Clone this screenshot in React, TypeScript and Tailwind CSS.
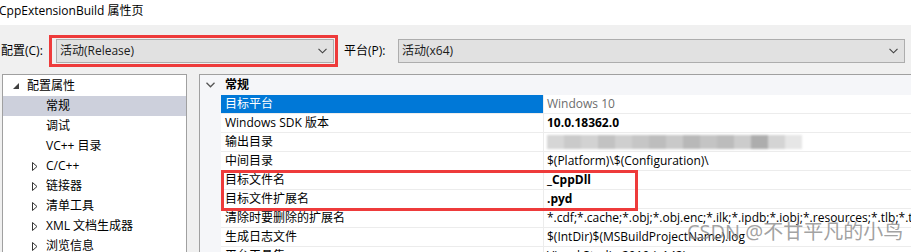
const font = '[font-family:"Open_Sans","Noto_Sans_CJK_SC",sans-serif]'

type Row = { name: string; value: string; bold?: boolean; gray?: boolean; blur?: boolean }

const rows: Row[] = [
  { name: '目标平台', value: 'Windows 10', gray: true },
  { name: 'Windows SDK 版本', value: '10.0.18362.0', bold: true },
  { name: '输出目录', value: '', blur: true },
  { name: '中间目录', value: '$(Platform)\\$(Configuration)\\' },
  { name: '目标文件名', value: '_CppDll', bold: true },
  { name: '目标文件扩展名', value: '.pyd', bold: true },
  { name: '清除时要删除的扩展名', value: '*.cdf;*.cache;*.obj;*.obj.enc;*.ilk;*.ipdb;*.iobj;*.resources;*.tlb;*.tli;*.tlh;*.tmp' },
  { name: '生成日志文件', value: '$(IntDir)$(MSBuildProjectName).log' },
  { name: '平台工具集', value: 'Visual Studio 2019 (v142)' },
]

const tree = [
  { label: '常规', selected: true },
  { label: '调试' },
  { label: 'VC++ 目录' },
  { label: 'C/C++', arrow: true },
  { label: '链接器', arrow: true },
  { label: '清单工具', arrow: true },
  { label: 'XML 文档生成器', arrow: true },
  { label: '浏览信息', arrow: true },
]

function Chevron() {
  return (
    <svg width="9" height="6" viewBox="0 0 9 6" className="shrink-0">
      <polyline points="0.5,0.8 4.5,4.8 8.5,0.8" fill="none" stroke="#404040" strokeWidth="1.1" />
    </svg>
  )
}

function Combo({ text, w }: { text: string; w: string }) {
  return (
    <div className={`${w} h-[24px] bg-[#e1e1e1] border border-[#adadad] flex items-center justify-between pl-[3px] pr-[6px]`}>
      <span className="text-[#1b1b1b]">{text}</span>
      <Chevron />
    </div>
  )
}

const blurs = ['#d6d6d6', '#cacaca', '#d2d2d2', '#c2c2c2', '#cfcfcf', '#c6c6c6', '#bdbdbd', '#c9c9c9', '#b8b8b8', '#c4c4c4', '#bcbcbc', '#cccccc', '#adadad', '#d4d4d4', '#e6e6e6']

export default function App() {
  return (
    <div className={`relative w-[911px] h-[252px] overflow-hidden bg-[#f0f0f0] text-[12px] leading-none text-black ${font}`}>
      {/* title */}
      <div className="h-[25px] bg-white flex items-center -ml-[1px] pb-[4px]">CppExtensionBuild 属性页</div>

      {/* configuration row */}
      <div className="h-[49px] flex items-start pt-[14px]">
        <div className="w-[56px] h-[24px] flex items-center pl-[1px]">配置(C):</div>
        <Combo text="活动(Release)" w="w-[278px]" />
        <div className="w-[64px] h-[24px] flex items-center pl-[10px]">平台(P):</div>
        <Combo text="活动(x64)" w="w-[507px]" />
      </div>

      {/* panels */}
      <div className="flex pl-[2px] gap-[12px] h-[200px]">
        <div className="w-[185px] shrink-0 bg-white border border-[#a0a0a0] pt-[1px]">
          <div className="h-[20px] flex items-center">
            <svg width="6" height="6" viewBox="0 0 6 6" className="ml-[10px] mr-[8px]">
              <polygon points="6,0 6,6 0,6" fill="#404040" />
            </svg>
            <span>配置属性</span>
          </div>
          {tree.map((t) => (
            <div key={t.label} className={`h-[20px] flex items-center ${t.selected ? 'bg-[#cdd0dc]' : ''}`}>
              <div className="w-[43px] shrink-0 flex justify-end pr-[8px]">
                {t.arrow && (
                  <svg width="6" height="9" viewBox="0 0 6 9">
                    <polygon points="0.5,0.5 5,4.5 0.5,8.5" fill="none" stroke="#333" strokeWidth="1" />
                  </svg>
                )}
              </div>
              <span>{t.label}</span>
            </div>
          ))}
        </div>

        <div className="w-[720px] shrink-0 bg-[#f5f6f9] border border-[#a0a0a0]">
          <div className="h-[20px] flex items-center">
            <svg width="9" height="6" viewBox="0 0 9 6" className="ml-[6px] mr-[10px]">
              <polyline points="0.5,0.8 4.5,4.8 8.5,0.8" fill="none" stroke="#555" strokeWidth="1.3" />
            </svg>
            <span className="font-bold">常规</span>
          </div>
          <div className="ml-[21px] bg-white">
            {rows.map((r, i) => (
              <div key={r.name} className="h-[19px] flex border-b border-[#ececec]">
                <div className={`w-[323px] shrink-0 flex items-center pl-[4px] border-r border-[#ececec] ${i === 0 ? 'bg-[#0078d7] text-white' : ''}`}>
                  {r.name}
                </div>
                <div
                  className={`flex-1 flex items-center pl-[3px] whitespace-nowrap overflow-hidden ${r.bold ? 'font-bold' : ''} ${r.gray ? 'text-[#6d6d6d]' : ''}`}
                >
                  {r.blur ? (
                    <div className="flex h-[14px] blur-[1px]">
                      {blurs.map((c, j) => (
                        <div key={j} className="w-[17px] h-full" style={{ background: c }} />
                      ))}
                    </div>
                  ) : (
                    r.value
                  )}
                </div>
              </div>
            ))}
          </div>
        </div>
      </div>

      {/* red annotations */}
      <div className="absolute left-[49px] top-[35px] w-[289px] h-[32px] border-[3px] border-[#ee3b3b]" />
      <div className="absolute left-[221px] top-[170px] w-[417px] h-[41px] border-[3px] border-[#ee3b3b]" />

      {/* watermark */}
      <div className="absolute left-[687px] top-[222px] text-[20px] text-[#8a8a8a]/80 whitespace-nowrap">CSDN @不甘平凡的小鸟</div>
    </div>
  )
}
